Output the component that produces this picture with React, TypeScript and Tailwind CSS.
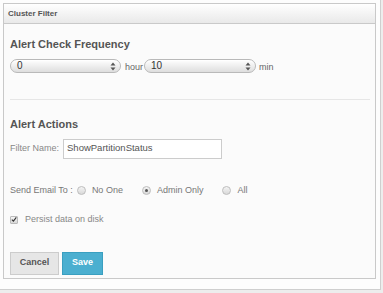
const font = { fontFamily: '"Liberation Sans", Arial, sans-serif' };

function Spinner() {
  return (
    <svg width="6" height="9" viewBox="0 0 6 9" className="shrink-0">
      <path d="M3 0.5 L5.5 3.5 L0.5 3.5 Z" fill="#555" />
      <path d="M3 8.5 L5.5 5.5 L0.5 5.5 Z" fill="#555" />
    </svg>
  );
}

function NumberSelect({ value, width }: { value: string; width: string }) {
  return (
    <div
      className={`${width} flex h-[14px] items-center justify-between rounded-full border border-[#b9b9b9] bg-gradient-to-b from-[#ffffff] to-[#dedede] pl-[6px] pr-[4px] text-[10px] leading-none text-[#333] shadow-[inset_0_1px_0_#fff]`}
    >
      <span>{value}</span>
      <Spinner />
    </div>
  );
}

function Radio({ checked }: { checked?: boolean }) {
  return (
    <span className="flex size-[9px] items-center justify-center rounded-full border border-[#bdbdbd] bg-gradient-to-b from-[#f4f4f4] to-[#d9d9d9]">
      {checked && <span className="size-[3px] rounded-full bg-[#555]" />}
    </span>
  );
}

function RadioOption({ label, checked }: { label: string; checked?: boolean }) {
  return (
    <label className="flex items-center gap-[6px]">
      <Radio checked={checked} />
      <span>{label}</span>
    </label>
  );
}

export default function App() {
  return (
    <div className="h-[293px] w-[383px] bg-[#ededed]" style={font}>
      <div className="h-[290px] w-[381px] border-r border-b border-[#cfcfcf] bg-[#fdfdfd] pl-[3px] pt-[3px]">
        <div className="flex h-[276px] w-[373px] flex-col border border-[#c9c9c9] bg-[#fbfbfb]">
          <div className="flex h-[20px] items-center border-b border-[#c9c9c9] bg-gradient-to-b from-[#ffffff] to-[#e9e9e9] pl-[4px]">
            <span className="text-[8px] font-bold text-[#555]">Cluster Filter</span>
          </div>

          <div className="flex flex-col px-[6px] pr-[5px]">
            <h2 className="mt-[14px] text-[11px] font-bold leading-[13px] text-[#555]">
              Alert Check Frequency
            </h2>
            <div className="mt-[7px] flex items-center text-[9px] text-[#666]">
              <NumberSelect value="0" width="w-[111px]" />
              <span className="ml-[4px] mt-[3px] mr-[1px]">hour</span>
              <NumberSelect value="10" width="w-[112px]" />
              <span className="ml-[3px] mt-[3px]">min</span>
            </div>

            <div className="mt-[24px] h-px bg-[#e6e6e6]" />

            <h2 className="mt-[18px] text-[11px] font-bold leading-[13px] text-[#555]">
              Alert Actions
            </h2>
            <div className="mt-[8px] flex items-center gap-[4px] text-[9px]">
              <span className="text-[#888]">Filter Name:</span>
              <div className="flex h-[20px] w-[159px] items-center border border-[#cccccc] bg-white px-[3px] pb-[1px] text-[9.5px] text-[#555]">
                ShowPartitionStatus
              </div>
            </div>

            <div className="mt-[26px] flex h-[12px] items-center text-[9px] text-[#777]">
              <span className="mr-[4px]">Send Email To :</span>
              <div className="flex items-center gap-[19px]">
                <RadioOption label="No One" />
                <RadioOption label="Admin Only" checked />
                <RadioOption label="All" />
              </div>
            </div>

            <label className="mt-[17px] flex h-[12px] items-center gap-[7px] text-[9px] text-[#888]">
              <span className="flex size-[8px] items-center justify-center rounded-[1px] border border-[#bbb] bg-gradient-to-b from-[#f6f6f6] to-[#d8d8d8]">
                <svg width="7" height="7" viewBox="0 0 7 7">
                  <path d="M1 3.6 L2.8 5.4 L6.2 1" stroke="#333" strokeWidth="1.3" fill="none" />
                </svg>
              </span>
              <span>Persist data on disk</span>
            </label>

            <div className="mt-[26px] flex gap-[3px] text-[9px] font-bold">
              <button
                type="button"
                className="h-[23px] w-[49px] border border-[#cccccc] bg-[#e6e6e6] text-[#555]"
              >
                Cancel
              </button>
              <button
                type="button"
                className="h-[23px] w-[41px] border border-[#3a9fc0] bg-[#4bafd0] text-white"
              >
                Save
              </button>
            </div>
          </div>
        </div>
      </div>
    </div>
  );
}
